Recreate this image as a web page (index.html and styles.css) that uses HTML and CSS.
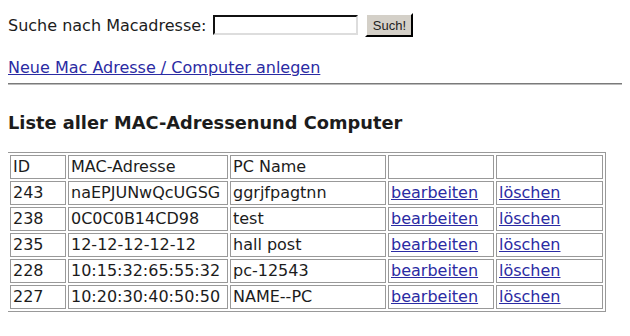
FILE: index.html
```html
<!DOCTYPE html>
<html>
<head>
	<meta charset="UTF-8">
	<title>MAC-Adressen</title>
	<link rel="stylesheet" href="styles.css">
</head>
<body>
	<form class="search">
		<label for="mac">Suche nach Macadresse:</label>
		<input type="text" id="mac">
		<button type="button">Such!</button>
	</form>
	<p class="new"><a href="#">Neue Mac Adresse / Computer anlegen</a></p>
	<div class="rule"></div>
	<h3>Liste aller MAC-Adressenund Computer</h3>
	<table class="list">
		<tr><td class="c-id">ID</td><td class="c-mac">MAC-Adresse</td><td class="c-pc">PC Name</td><td class="c-edit"></td><td class="c-del"></td></tr>
		<tr><td>243</td><td>naEPJUNwQcUGSG</td><td>ggrjfpagtnn</td><td><a href="#">bearbeiten</a></td><td><a href="#">löschen</a></td></tr>
		<tr><td>238</td><td>0C0C0B14CD98</td><td>test</td><td><a href="#">bearbeiten</a></td><td><a href="#">löschen</a></td></tr>
		<tr><td>235</td><td>12-12-12-12-12</td><td>hall post</td><td><a href="#">bearbeiten</a></td><td><a href="#">löschen</a></td></tr>
		<tr><td>228</td><td>10:15:32:65:55:32</td><td>pc-12543</td><td><a href="#">bearbeiten</a></td><td><a href="#">löschen</a></td></tr>
		<tr><td>227</td><td>10:20:30:40:50:50</td><td>NAME--PC</td><td><a href="#">bearbeiten</a></td><td><a href="#">löschen</a></td></tr>
	</table>
</body>
</html>
```
FILE: styles.css
```css
body {
	margin: 8px;
	font-family: "DejaVu Sans", Verdana, sans-serif;
	font-size: 16px;
	color: #1c1c1c;
	background-color: #fff;
}
a {
	color: #2b2ba3;
}
.search {
	display: flex;
	align-items: center;
	margin: 5px 0 0;
	height: 24px;
}
.search label {
	margin-right: 7px;
}
.search input {
	width: 141px;
	height: 16px;
	padding: 0;
	border: 2px inset #888;
	border-color: #666 #ddd #ddd #666;
	margin: 0 7px 0 0;
}
.search button {
	font-family: "Liberation Sans", Arial, sans-serif;
	font-size: 13px;
	width: 48px;
	height: 24px;
	padding: 0;
	background-color: #d4d0c8;
	border: 2px outset #d4d0c8;
	border-color: #fff #555 #555 #fff;
	color: #222;
}
.new {
	margin: 21px 0 0;
}
.rule {
	margin: 6px -8px 0 -1px;
	height: 0;
	border-top: 1px solid #7a7a7a;
	border-bottom: 1px solid #bbb;
}
h3 {
	font-size: 17.8px;
	margin: 27px 0 19px;
}
.list {
	table-layout: fixed;
	width: 599px;
	border: 1px solid #999;
	border-spacing: 2px;
	margin-left: -1px;
}
.list td {
	border: 1px solid #999;
	padding: 2px 2px;
	height: 18px;
	line-height: 18px;
	white-space: nowrap;
	overflow: hidden;
}
.c-id { width: 50px; }
.c-mac { width: 154px; }
.c-pc { width: 150px; }
.c-edit { width: 100px; }
.c-del { width: 101px; }
```
